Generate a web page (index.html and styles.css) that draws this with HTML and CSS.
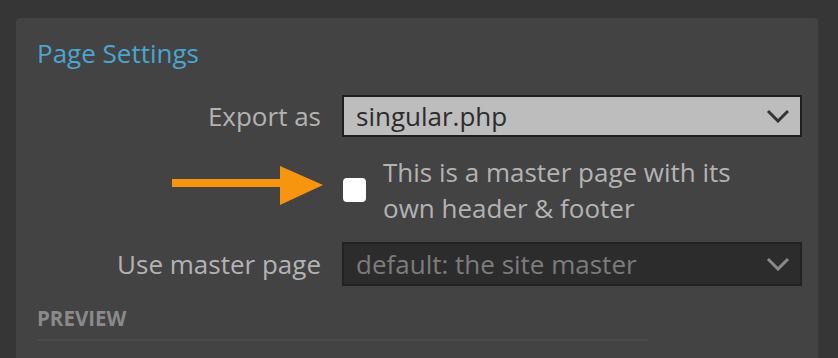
FILE: index.html
```html
<!DOCTYPE html>
<html>
<head>
	<title>Page Settings</title>
	<meta charset="utf-8">
	<link rel="stylesheet" href="styles.css">
</head>
<body>

	<div class="panel">
		<h2 class="panel-title">Page Settings</h2>

		<div class="field">
			<label class="field-label" for="export-as">Export as</label>
			<div class="select select-light">
				<span id="export-as">singular.php</span>
				<svg class="chevron" width="24" height="14" viewBox="0 0 24 14"><path d="M2 2 L12 12 L22 2" fill="none" stroke="currentColor" stroke-width="3"/></svg>
			</div>
		</div>

		<div class="field field-check">
			<div class="field-label">
				<svg class="pointer" width="152" height="40" viewBox="0 0 152 40"><path d="M0 13 H108 V0 L151 19 L108 39 V21 H0 Z" fill="#f7950f"/></svg>
			</div>
			<label class="check">
				<span class="check-box"></span>
				<span class="check-text">This is a master page with its own header &amp; footer</span>
			</label>
		</div>

		<div class="field">
			<label class="field-label">Use master page</label>
			<div class="select select-dark">
				<span>default: the site master</span>
				<svg class="chevron" width="24" height="14" viewBox="0 0 24 14"><path d="M2 2 L12 12 L22 2" fill="none" stroke="currentColor" stroke-width="3"/></svg>
			</div>
		</div>

		<h3 class="section-title">PREVIEW</h3>
		<div class="section-rule"></div>
	</div>

</body>
</html>
```

FILE: styles.css
```css
*,
*:before,
*:after {
	box-sizing: border-box;
}

body {
	margin: 0;
	background-color: #363636;
	font-family: "Open Sans", "Liberation Sans", sans-serif;
	overflow: hidden;
	height: 358px;
}

.panel {
	margin: 18px 20px 0 16px;
	padding: 19px 16px 0 21px;
	background-color: #434343;
	border-radius: 4px 4px 0 0;
	height: 340px;
}

.panel-title {
	margin: 0 0 26px;
	font-size: 26px;
	font-weight: 400;
	line-height: 32px;
	color: #4ba5cf;
}

.field {
	display: grid;
	grid-template-columns: 284px 460px;
	grid-column-gap: 21px;
	align-items: center;
	margin-bottom: 17px;
}

.field-label {
	text-align: right;
	font-size: 26px;
	line-height: 36px;
	color: #b3b3b3;
}

.select {
	display: flex;
	align-items: center;
	justify-content: space-between;
	height: 42px;
	padding: 0 10px 0 12px;
	border: 2px solid #1f1f1f;
	font-size: 26px;
}

.select-light {
	background-color: #bdbdbd;
	color: #2c2c2c;
}

.select-dark {
	height: 44px;
	background-color: #2c2c2c;
	border-color: #222;
	color: #7c7c7c;
}

.select-light .chevron {
	color: #333;
}

.select-dark .chevron {
	color: #8a8a8a;
}

.field-check {
	position: relative;
	margin-bottom: 16px;
}

.pointer {
	position: absolute;
	left: 135px;
	top: 12px;
}

.check {
	display: flex;
	align-items: center;
	gap: 17px;
	padding-left: 1px;
}

.check-box {
	flex: none;
	width: 23px;
	height: 24px;
	background-color: #fff;
	border-radius: 4px;
}

.check-text {
	max-width: 400px;
	font-size: 26px;
	line-height: 36px;
	color: #b3b3b3;
}

.section-title {
	margin: 18px 0 0;
	font-size: 20.5px;
	font-weight: 700;
	line-height: 28px;
	color: #8a8a8a;
}

.section-rule {
	width: 611px;
	height: 2px;
	margin-top: 7px;
	background-color: #4b4b4b;
}
```
